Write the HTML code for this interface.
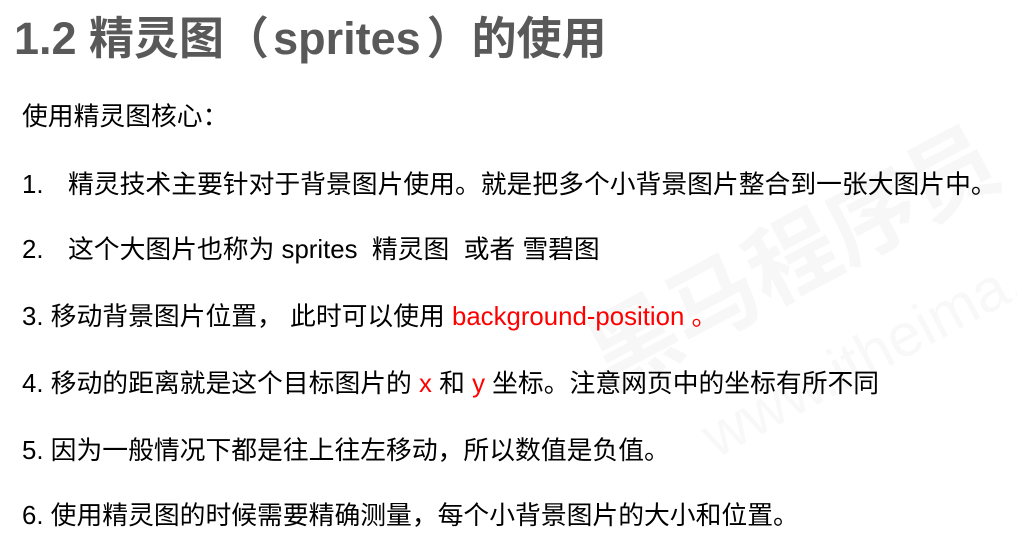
<!DOCTYPE html>
<html><head><meta charset="utf-8"><style>
body{margin:0;width:1017px;height:544px;background:#fff;position:relative;overflow:hidden;font-family:"Liberation Sans","Noto Sans CJK SC",sans-serif;}
.t{position:absolute;left:14px;top:2px;font-size:45px;font-weight:bold;color:#595959;white-space:nowrap;}
.l{position:absolute;left:22px;font-size:25.8px;color:#000;white-space:nowrap;line-height:30px;}
.r{color:#f00}
.n{display:inline-block;width:46px}
.wm{position:absolute;left:560px;top:300px;font-size:90px;font-weight:bold;color:#f7f7f7;transform:rotate(-28deg);transform-origin:left top;white-space:nowrap;}
.wm2{position:absolute;left:690px;top:410px;font-size:60px;color:#f8f8f8;transform:rotate(-28deg);transform-origin:left top;white-space:nowrap;}
</style></head><body>
<div class="wm">黑马程序员</div>
<div class="wm2">www.itheima.com</div>
<div class="t">1.2 精灵图（<span style="margin-left:4px">sprites</span><span style="margin-left:6px">）</span>的使用</div>
<div class="l" style="top:102px">使用精灵图核心：</div>
<div class="l" style="top:170px"><span class="n">1.</span>精灵技术主要针对于背景图片使用。就是把多个小背景图片整合到一张大图片中。</div>
<div class="l" style="top:235px"><span class="n">2.</span>这个大图片也称为 sprites&nbsp; 精灵图&nbsp; 或者 雪碧图</div>
<div class="l" style="top:302px">3. 移动背景图片位置， 此时可以使用 <span class="r">background-position 。</span></div>
<div class="l" style="top:369px">4. 移动的距离就是这个目标图片的 <span class="r">x</span> 和 <span class="r">y</span> 坐标。注意网页中的坐标有所不同</div>
<div class="l" style="top:436px">5. 因为一般情况下都是往上往左移动，所以数值是负值。</div>
<div class="l" style="top:501px">6. 使用精灵图的时候需要精确测量，每个小背景图片的大小和位置。</div>
</body></html>
